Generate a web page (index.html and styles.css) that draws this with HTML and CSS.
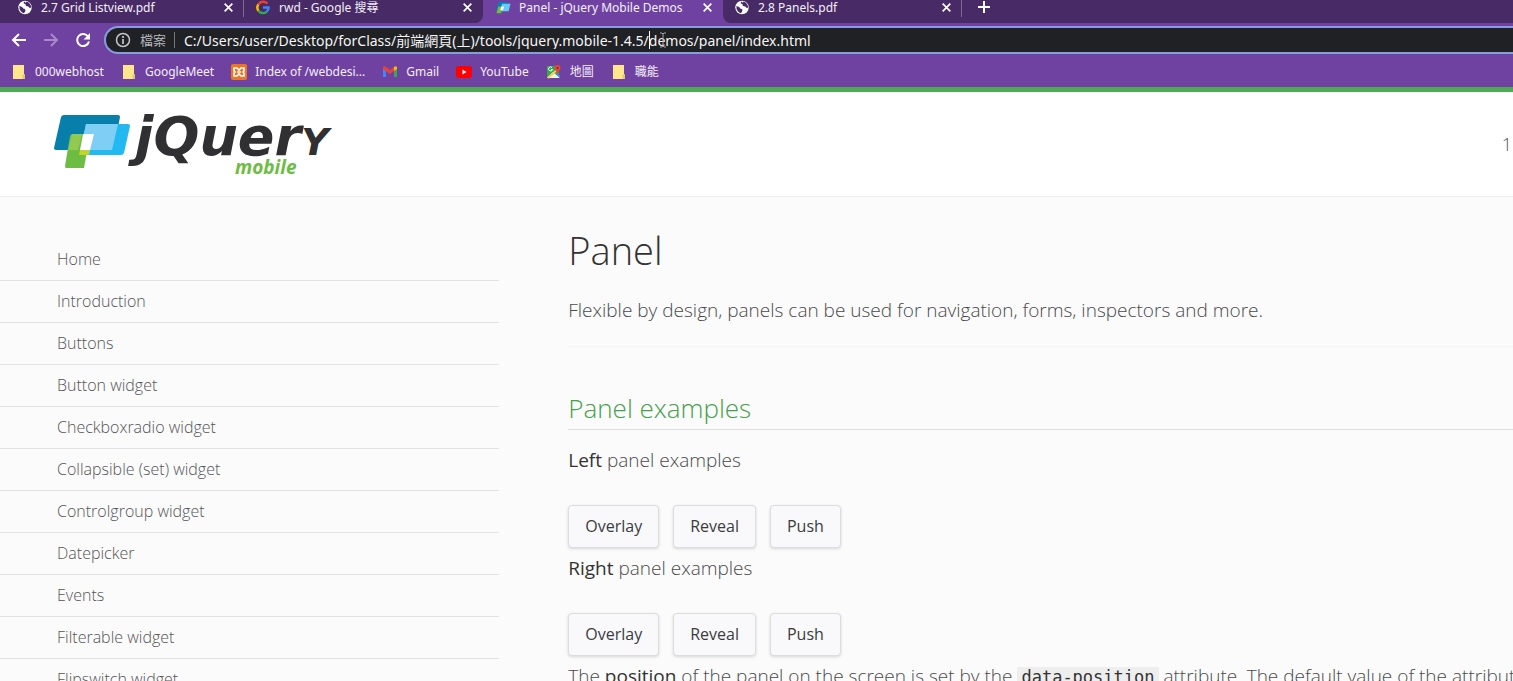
FILE: index.html
```html
<!DOCTYPE html>
<html lang="en">
<head>
<meta charset="utf-8">
<title>Panel - jQuery Mobile Demos</title>
<link rel="stylesheet" href="styles.css">
</head>
<body>
<svg class="defs" width="0" height="0" aria-hidden="true">
  <symbol id="globe" viewBox="0 0 16 16"><circle cx="8" cy="8" r="7.2" fill="#fff"/><path d="M2 6.500l3 1 1 1.500 2 .5.500 2-1.500 2.500c-2-.5-4-2-4.800-4.500zM7 1.500l-.5 2 2 1 .5 2 2.500.5 1.500 1.500 1.800-.5C14.300 5 12 2 9.500 1.600L9 3z" fill="#472a66"/></symbol>
  <symbol id="close" viewBox="0 0 10 10"><path d="M1.500 1.500l7 7m0-7l-7 7" stroke="#fff" stroke-width="1.500" fill="none"/></symbol>
  <symbol id="folder" viewBox="0 0 14 16"><path d="M1 1h11v9l1 1v4H1z" fill="#fde68b"/><path d="M10.500 14v-2.500L12 10l1 1v4h-2z" fill="#e9c75c"/></symbol>
</svg>

<div class="browser">
  <div class="tabs">
    <div class="tab tab-first"><svg class="fav"><use href="#globe"/></svg><span class="tab-title">2.7 Grid Listview.pdf</span><button class="tab-close" aria-label="Close tab"><svg><use href="#close"/></svg></button></div>
    <div class="tab tab-before"><svg class="fav" viewBox="0 0 16 16" fill="none" stroke-width="2.600"><path d="M3 4.800A6 6 0 0 1 12.600 3.800" stroke="#ea4335"/><path d="M3.100 11.500A6 6 0 0 1 3 4.800" stroke="#fbbc05"/><path d="M11.800 12.600A6 6 0 0 1 3.100 11.500" stroke="#34a853"/><path d="M8 8h6a6 6 0 0 1-2.200 4.600" stroke="#4285f4"/></svg><span class="tab-title">rwd - Google 搜尋</span><button class="tab-close" aria-label="Close tab"><svg><use href="#close"/></svg></button></div>
    <div class="tab tab-active"><svg class="fav" viewBox="0 0 16 16"><path d="M3 2h10l-2 9H1z" fill="#087eaf"/><path d="M7 4h9l-2 8H5z" fill="#67cbf5"/><path d="M3 7h5l-2 7H1z" fill="#6dbc45"/><path d="M6 7h3l-1 4H5z" fill="#fff"/></svg><span class="tab-title">Panel - jQuery Mobile Demos</span><button class="tab-close" aria-label="Close tab"><svg><use href="#close"/></svg></button></div>
    <div class="tab tab-after"><svg class="fav"><use href="#globe"/></svg><span class="tab-title">2.8 Panels.pdf</span><button class="tab-close" aria-label="Close tab"><svg><use href="#close"/></svg></button></div>
    <button class="new-tab" aria-label="New tab"><svg viewBox="0 0 14 14"><path d="M7 1v12M1 7h12" stroke="#fff" stroke-width="2"/></svg></button>
  </div>

  <div class="toolbar">
    <button class="nav-button" aria-label="Back"><svg viewBox="0 0 16 16"><path d="M15 8H2M8 2L2 8l6 6" fill="none" stroke="#fff" stroke-width="2"/></svg></button>
    <button class="nav-button" aria-label="Forward" disabled><svg viewBox="0 0 16 16"><path d="M1 8h13M8 2l6 6-6 6" fill="none" stroke="#aa89c9" stroke-width="2"/></svg></button>
    <button class="nav-button" aria-label="Reload"><svg viewBox="0 0 16 16"><path d="M13.200 4.700A6 6 0 1 0 14 9.500" fill="none" stroke="#fff" stroke-width="2"/><path d="M15 1v6.500H8.500z" fill="#fff"/></svg></button>
    <div class="address">
      <svg class="info" viewBox="0 0 16 16"><circle cx="8" cy="8" r="6.500" fill="none" stroke="#c4c5c7" stroke-width="1.500"/><path d="M8 7v5M8 4v2" stroke="#c4c5c7" stroke-width="1.700"/></svg>
      <label class="scheme" for="url">檔案</label>
      <input id="url" class="url" type="text" value="C:/Users/user/Desktop/forClass/前端網頁(上)/tools/jquery.mobile-1.4.5/demos/panel/index.html">
      <svg class="pointer" viewBox="0 0 18 18"><path d="M1.500 0v18" stroke="#fff"/><path d="M12 2h2l1 1 1-1h2M15 3v12M12 16h2l1-1 1 1h2" fill="none" stroke="#a4a4a0"/></svg>
    </div>
  </div>

  <nav class="bookmarks" aria-label="Bookmarks">
    <a href="#"><svg><use href="#folder"/></svg>000webhost</a>
    <a href="#"><svg><use href="#folder"/></svg>GoogleMeet</a>
    <a href="#"><svg viewBox="0 0 16 16"><rect width="16" height="16" rx="2" fill="#ed7625"/><path d="M3 4h3l2 2 2-2h3v3l-1 1 1 1v3h-3l-2-2-2 2H3V9l1-1-1-1z" fill="none" stroke="#fff" stroke-width="1.600"/><path d="M6 8h4" stroke="#fff" stroke-width="1.500"/></svg>Index of /webdesi...</a>
    <a href="#"><svg viewBox="0 0 16 16"><path d="M1 4v9h3V7z" fill="#4285f4"/><path d="M15 4v9h-3V7z" fill="#34a853"/><path d="M1 4c0-2 2-2 3-1l4 3 4-3v4l-4 3-4-3-3-2z" fill="#ea4335"/><path d="M12 3c1-1 3-1 3 1v1l-3 2z" fill="#fbbc04"/></svg>Gmail</a>
    <a href="#"><svg viewBox="0 0 16 16"><rect y="2" width="16" height="12" rx="3" fill="#f00"/><path d="M6.500 5.500v5l4-2.500z" fill="#fff"/></svg>YouTube</a>
    <a href="#"><svg viewBox="0 0 16 16"><path d="M1 2h12v12H1z" fill="#34a853"/><path d="M7 8l7 6H1z" fill="#f3f3e9"/><path d="M2 14L13 4" stroke="#fbd04a" stroke-width="2"/><path d="M9 9l5 2v3z" fill="#4285f4"/><path d="M8.500 4a3 3 0 0 1 6 0c0 2-2 3-3 6-1-3-3-4-3-6" fill="#ea4335"/><circle cx="11.500" cy="4" r="1" fill="#8d251b"/><path d="M6 3.500a2 2 0 1 0 .5 2H5" fill="none" stroke="#fff"/></svg>地圖</a>
    <a href="#"><svg><use href="#folder"/></svg>職能</a>
  </nav>
</div>

<header class="site-header">
  <a class="logo" href="#" aria-label="jQuery mobile">
    <svg viewBox="0 0 280 66">
      <path d="M10 1h54q2 0 2 2l-6 31q-1 2-3 2H3q-3 0-3-2L7 3q1-2 3-2z" fill="#087eaa"/>
      <path d="M32 10h42q2 0 2 2l-6 27q-1 2-3 2H26z" fill="#22b9f2"/>
      <path d="M32 10h32l-6 26H26z" fill="#7fcef5"/>
      <path d="M18 20h18l-6 34H12q-1 0-1-2l5-30q1-2 2-2z" fill="#6dbd45"/>
      <path d="M18 20h10l-4 16H14z" fill="#91c951"/>
      <path d="M29 20h11l-4 16H26z" fill="#fff"/>
      <path d="M26 36h10l-1 5h-10z" fill="#bfd52c"/>
      <text class="logo-name" x="81" y="41">jQuer<tspan class="logo-cap">y</tspan></text>
      <text class="logo-sub" x="181" y="60">mobile</text>
    </svg>
  </a>
  <span class="version">1</span>
</header>

<div class="page">
  <nav class="menu" aria-label="Demos">
    <a href="#">Home</a>
    <a href="#">Introduction</a>
    <a href="#">Buttons</a>
    <a href="#">Button widget</a>
    <a href="#">Checkboxradio widget</a>
    <a href="#">Collapsible (set) widget</a>
    <a href="#">Controlgroup widget</a>
    <a href="#">Datepicker</a>
    <a href="#">Events</a>
    <a href="#">Filterable widget</a>
    <a href="#">Flipswitch widget</a>
  </nav>
  <main class="content">
    <h1>Panel</h1>
    <p class="lead">Flexible by design, panels can be used for navigation, forms, inspectors and more.</p>
    <h2>Panel examples</h2>
    <p><strong>Left</strong> panel examples</p>
    <div class="buttons"><button>Overlay</button><button>Reveal</button><button>Push</button></div>
    <p><strong>Right</strong> panel examples</p>
    <div class="buttons"><button>Overlay</button><button>Reveal</button><button>Push</button></div>
    <p class="note">The <strong>position</strong> of the panel on the screen is set by the <code>data-position</code> attribute. The default value of the attribute is</p>
  </main>
</div>
</body>
</html>
```

FILE: styles.css
```css
* { box-sizing: border-box; }
html, body { height: 100%; }
body {
  margin: 0;
  display: flex;
  flex-direction: column;
  overflow: hidden;
  background: #fbfbfc;
  color: #333;
  font-family: "Open Sans", "Noto Sans CJK TC", sans-serif;
  font-weight: 300;
}
button { border: 0; padding: 0; background: none; font: inherit; color: inherit; }
a { color: inherit; text-decoration: none; }
svg { display: block; flex: none; }
.defs { position: absolute; }

.browser {
  flex: none;
  background: #6f42a1;
  border-bottom: 5px solid #50a954;
  color: #f4effa;
  font-family: "Noto Sans", "Noto Sans CJK TC", sans-serif;
  font-weight: 400;
  font-size: 12px;
}
.tabs { display: flex; height: 23px; background: #472a66; }
.tab {
  display: flex;
  align-items: flex-start;
  width: 239px;
  padding: 0 10px 0 11px;
  line-height: 15px;
  position: relative;
}
.tab-first { width: 244px; padding-left: 17px; }
.tab-first::after, .tab-after::after {
  content: "";
  position: absolute;
  right: 0;
  top: 0;
  width: 1px;
  height: 17px;
  background: #7d6894;
}
.tab-active { width: 240px; background: #6f42a1; padding-left: 12px; }
.tab-before { background: #472a66; border-bottom-right-radius: 8px; box-shadow: 8px 0 0 #6f42a1; }
.tab-active { z-index: -1; }
.tabs, .browser { position: relative; z-index: 0; }
.tab-after { border-bottom-left-radius: 8px; background: #472a66; box-shadow: -8px 0 0 #6f42a1; }
.fav { width: 16px; height: 15px; margin-right: 8px; }
.tab-title { flex: 1; white-space: nowrap; }
.tab-close { padding: 2px 0; }
.tab-close svg { width: 11px; height: 11px; }
.new-tab { align-self: flex-start; margin-left: 15px; }
.new-tab svg { width: 14px; height: 14px; }

.toolbar { display: flex; align-items: center; height: 33px; padding-left: 11px; gap: 16px; }
.nav-button svg { width: 16px; height: 16px; }
.address {
  position: relative;
  flex: 1;
  display: flex;
  align-items: center;
  height: 28px;
  margin-left: -3px;
  padding-left: 9px;
  border: 2px solid #879cdd;
  border-right: 0;
  border-radius: 14px 0 0 14px;
  background: #202125;
}
.info { width: 16px; height: 16px; margin-right: 9px; }
.scheme { padding-right: 8px; border-right: 1px solid #77777b; color: #b5b6b8; font-size: 13px; line-height: 16px; }
.url {
  flex: 1;
  min-width: 0;
  border: 0;
  outline: 0;
  padding: 0 0 0 9px;
  background: transparent;
  color: #f5f5f5;
  font: inherit;
  font-size: 14px;
}
.pointer { position: absolute; left: 542px; top: 3px; width: 18px; height: 18px; }
.bookmarks { display: flex; align-items: center; height: 31px; padding-left: 11px; gap: 17px; }
.bookmarks a { display: flex; align-items: center; gap: 8px; white-space: nowrap; line-height: 18px; }
.bookmarks svg { width: 16px; height: 16px; }

.site-header {
  flex: none;
  display: flex;
  align-items: center;
  justify-content: space-between;
  height: 105px;
  padding: 0 1px 0 54px;
  background: #fff;
  border-bottom: 1px solid #eee;
}
.logo { padding-top: 6px; }
.logo svg { width: 280px; height: 66px; }
.logo-name { font: italic 700 54px "DejaVu Sans", sans-serif; fill: #303032; }
.logo-cap { font-variant: small-caps; }
.logo-sub { font: italic 700 19px "Open Sans", sans-serif; fill: #6dbd45; }
.version { color: #555; font-size: 18px; }

.page { flex: 1; min-height: 0; display: flex; }
.menu { flex: none; width: 33%; padding-top: 42px; }
.menu a {
  display: block;
  padding: 0 0 0 57px;
  border-bottom: 1px solid #e3e3e5;
  color: #555;
  font-size: 16px;
  line-height: 41px;
}
.content { flex: 1; min-width: 0; padding: 26px 0 0 69px; font-size: 19px; line-height: 28px; }
.content p { margin: 0; white-space: nowrap; color: #4a4a4a; }
h1 { margin: 0; font-size: 38px; font-weight: 300; line-height: 54px; }
.content .lead { margin: 19px 0 43px; padding-bottom: 22px; border-bottom: 1px solid #f5f5f6; }
h2 {
  margin: 0 0 16px;
  padding-bottom: 3px;
  border-bottom: 1px solid #ddd;
  color: #46a04c;
  font-size: 26px;
  font-weight: 300;
  line-height: 36px;
}
strong { font-weight: 400; color: #333; }
.buttons { display: flex; gap: 14px; margin: 31px 0 6px; }
.buttons button {
  padding: 0 16px;
  border: 1px solid #ddd;
  border-radius: 4px;
  background: #f9f9fb;
  box-shadow: 0 1px 3px rgba(0, 0, 0, 0.15);
  color: #3c3c3c;
  font-size: 16px;
  font-weight: 400;
  line-height: 41px;
}
code { padding: 0 4px; background: #eee; color: #333; font: 400 17px "DejaVu Sans Mono", monospace; }
```
